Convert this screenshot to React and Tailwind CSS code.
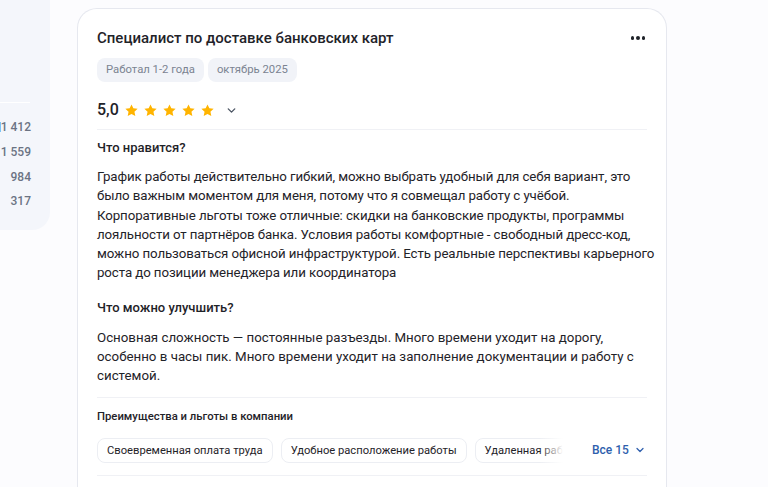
import React from 'react'

const stats = ['1 412', '1 559', '984', '317']
const perks = ['Своевременная оплата труда', 'Удобное расположение работы', 'Удаленная работа']

function Star() {
  return (
    <svg width="15" height="15" viewBox="0 0 24 24" fill="#ffb400">
      <path d="M12 2.2l2.95 6.3 6.85.8-5.07 4.7 1.37 6.8L12 17.4l-6.1 3.4 1.37-6.8L2.2 9.3l6.85-.8z" />
    </svg>
  )
}

function Chevron({ color = '#4b5563', size = 14 }) {
  return (
    <svg width={size} height={size} viewBox="0 0 24 24" fill="none" stroke={color} strokeWidth="2.5" strokeLinecap="round" strokeLinejoin="round">
      <path d="M6 9l6 6 6-6" />
    </svg>
  )
}

export default function App() {
  return (
    <div className="flex h-[487px] overflow-hidden bg-[#fcfcfe] font-['Roboto',sans-serif] text-[#1f2329]">
      <div className="flex w-[50px] shrink-0 flex-col items-end self-start rounded-br-[18px] bg-[#f4f6fb] pr-[19px] pt-[102px] pb-[16px]">
        <div className="mb-[12px] h-px w-[30px] self-start bg-white" />
        {stats.map((s, i) => (
          <div key={s} className="relative flex h-[24.7px] items-center text-[12px] font-medium text-[#6b7383]">
            {i === 0 && <span className="absolute -left-[2px] h-[10px] w-[2px] bg-[#7cc4f5]" />}
            {s}
          </div>
        ))}
      </div>

      <div className="ml-[27px] mt-[8px] w-[590px] shrink-0 rounded-t-[20px] border border-b-0 border-[#e6e8ef] bg-white px-[19px] pt-[18px]">
        <div className="flex items-center justify-between">
          <h1 className="text-[15px] font-medium leading-[22px]">Специалист по доставке банковских карт</h1>
          <div className="mr-[2px] flex gap-[2px]">
            <span className="h-[3.5px] w-[3.5px] rounded-full bg-[#1f2329]" />
            <span className="h-[3.5px] w-[3.5px] rounded-full bg-[#1f2329]" />
            <span className="h-[3.5px] w-[3.5px] rounded-full bg-[#1f2329]" />
          </div>
        </div>
        <div className="mt-[9px] flex gap-[4px]">
          <span className="rounded-[8px] bg-[#f1f3f8] px-[9px] py-[4px] text-[11.3px] leading-[16px] text-[#7b8391]">Работал 1-2 года</span>
          <span className="rounded-[8px] bg-[#f1f3f8] px-[9px] py-[4px] text-[11.3px] leading-[16px] text-[#7b8391]">октябрь 2025</span>
        </div>
        <div className="mt-[16px] flex items-center">
          <span className="text-[16px] font-medium leading-[24px]">5,0</span>
          <div className="ml-[5px] flex gap-[4px]">
            <Star /><Star /><Star /><Star /><Star />
          </div>
          <span className="ml-[10px]"><Chevron size={13} /></span>
        </div>
        <div className="mt-[7px] h-px bg-[#f0f1f5]" />

        <h2 className="mt-[8px] text-[13px] font-medium leading-[20px]">Что нравится?</h2>
        <p className="mr-[-12px] mt-[9px] text-[13.3px] leading-[19.3px] tracking-[-0.1px]">
          График работы действительно гибкий, можно выбрать удобный для себя вариант, это было важным моментом для меня, потому что я совмещал работу с учёбой. Корпоративные льготы тоже отличные: скидки на банковские продукты, программы лояльности от партнёров банка. Условия работы комфортные - свободный дресс-код, можно пользоваться офисной инфраструктурой. Есть реальные перспективы карьерного роста до позиции менеджера или координатора
        </p>

        <h2 className="mt-[15px] text-[13px] font-medium leading-[20px]">Что можно улучшить?</h2>
        <p className="mt-[10px] text-[13.3px] leading-[19.3px]">
          Основная сложность — постоянные разъезды. Много времени уходит на дорогу, особенно в часы пик. Много времени уходит на заполнение документации и работу с системой.
        </p>

        <div className="mt-[11px] h-px bg-[#f0f1f5]" />
        <h3 className="mt-[10px] text-[11.3px] font-medium leading-[18px]">Преимущества и льготы в компании</h3>
        <div className="mt-[12px] flex items-center">
          <div className="relative flex w-[466px] shrink-0 gap-[8px] overflow-hidden">
            {perks.map((p) => (
              <span key={p} className="shrink-0 rounded-[8px] border border-[#eceef3] px-[9px] py-[3px] text-[11.2px] leading-[17px]">{p}</span>
            ))}
            <div className="absolute right-0 top-0 h-full w-[24px] bg-gradient-to-r from-transparent to-white" />
          </div>
          <button className="ml-[29px] flex shrink-0 items-center gap-[5px] whitespace-nowrap text-[12px] font-medium text-[#2f5fad]">
            Все 15 <Chevron color="#2f5fad" size={12} />
          </button>
        </div>
        <div className="mt-[12px] h-px bg-[#f0f1f5]" />
      </div>
    </div>
  )
}
